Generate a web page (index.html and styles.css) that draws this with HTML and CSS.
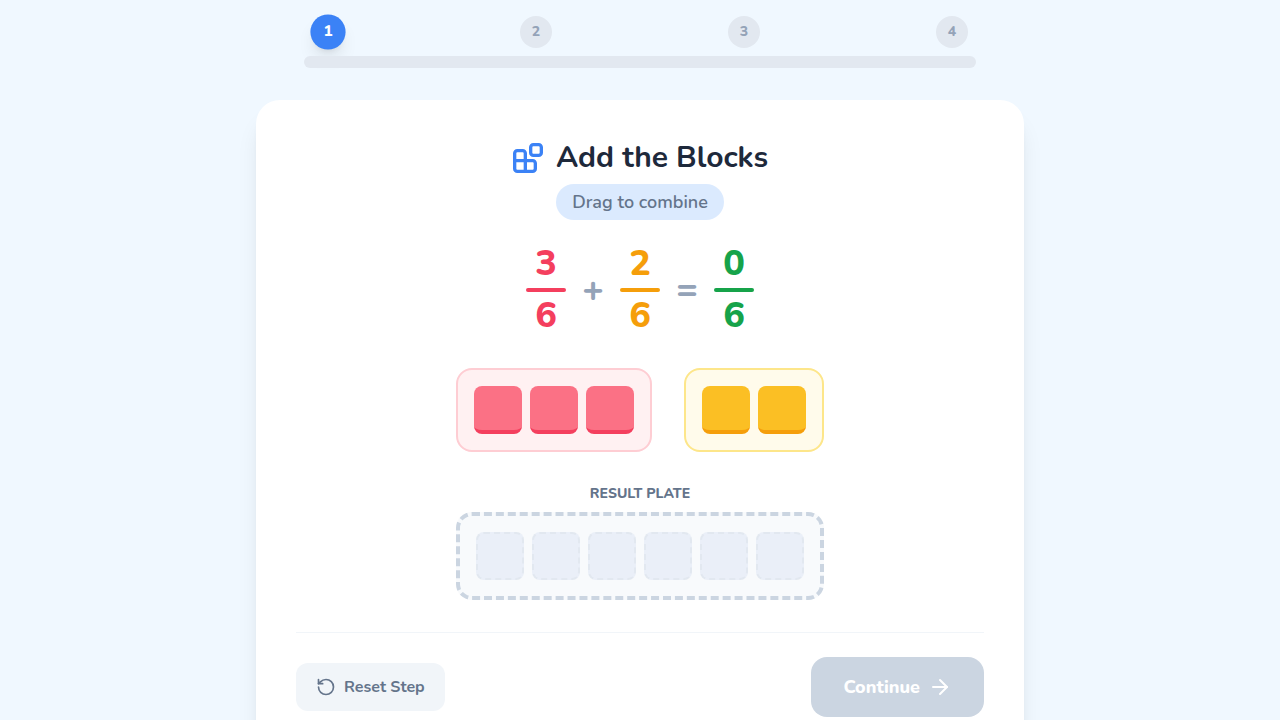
FILE: index.html
```
<!DOCTYPE html>
<html lang="en">
    <head>
        <meta charset="utf-8">
        <meta name="viewport" content="width=device-width, initial-scale=1">
        <title>Add the Blocks</title>

        <link rel="stylesheet" href="styles.css">
    </head>

    <body>
        <div class="page">
            <div class="progress">
                <ol class="steps">
                    <li class="step active">1</li>
                    <li class="step">2</li>
                    <li class="step">3</li>
                    <li class="step">4</li>
                </ol>
                <div class="track"></div>
            </div>

            <main class="card">
                <header class="intro">
                    <h1 class="title">
                        <svg class="title_icon" viewBox="0 0 24 24" aria-hidden="true">
                            <rect width="8" height="8" x="14" y="2" rx="2"/>
                            <path d="M10 22V8.500a2 2 0 0 0-2-2H4a2 2 0 0 0-2 2V20a2 2 0 0 0 2 2h11.500a2 2 0 0 0 2-2v-4a2 2 0 0 0-2-2H2"/>
                        </svg>
                        Add the Blocks
                    </h1>
                    <p class="hint">Drag to combine</p>
                </header>

                <div class="equation">
                    <div class="fraction rose">
                        <span>3</span>
                        <span class="line"></span>
                        <span>6</span>
                    </div>
                    <span class="operator">+</span>
                    <div class="fraction amber">
                        <span>2</span>
                        <span class="line"></span>
                        <span>6</span>
                    </div>
                    <span class="operator">=</span>
                    <div class="fraction green">
                        <span>0</span>
                        <span class="line"></span>
                        <span>6</span>
                    </div>
                </div>

                <div class="sources">
                    <div class="tray tray_rose">
                        <div class="block block_rose" draggable="true"></div>
                        <div class="block block_rose" draggable="true"></div>
                        <div class="block block_rose" draggable="true"></div>
                    </div>
                    <div class="tray tray_amber">
                        <div class="block block_amber" draggable="true"></div>
                        <div class="block block_amber" draggable="true"></div>
                    </div>
                </div>

                <section class="result">
                    <h2 class="result_label">Result Plate</h2>
                    <div class="plate">
                        <div class="slot"></div>
                        <div class="slot"></div>
                        <div class="slot"></div>
                        <div class="slot"></div>
                        <div class="slot"></div>
                        <div class="slot"></div>
                    </div>
                </section>

                <footer class="actions">
                    <button type="button" class="reset">
                        <svg class="reset_icon" viewBox="0 0 24 24" aria-hidden="true">
                            <path d="M3 12a9 9 0 1 0 9-9 9.75 9.75 0 0 0-6.74 2.74L3 8"/>
                            <path d="M3 3v5h5"/>
                        </svg>
                        Reset Step
                    </button>
                    <button type="button" class="continue" disabled>
                        Continue
                        <svg class="continue_icon" viewBox="0 0 24 24" aria-hidden="true">
                            <path d="M5 12h14"/>
                            <path d="m12 5 7 7-7 7"/>
                        </svg>
                    </button>
                </footer>
            </main>
        </div>
    </body>
</html>
```
FILE: styles.css
```
*
{
    box-sizing:border-box;
    margin:0;
    padding:0;
}

body
{
    min-height:100vh;
    background-color:#f0f8ff;
    color:#1e293b;
    font-family:"Nunito", "Open Sans", sans-serif;
    font-size:16px;
    line-height:24px;
}

svg
{
    fill:none;
    stroke:currentColor;
    stroke-width:2;
    stroke-linecap:round;
    stroke-linejoin:round;
    flex-shrink:0;
}

.page
{
    max-width:768px;
    margin:0 auto;
    padding:16px 0 32px;
}

.progress
{
    max-width:672px;
    margin:0 auto 32px;
}

.steps
{
    display:flex;
    justify-content:space-between;
    list-style:none;
    padding:0 8px;
    margin-bottom:8px;
}

.step
{
    display:flex;
    align-items:center;
    justify-content:center;
    width:32px;
    height:32px;
    border-radius:50%;
    background-color:#e2e8f0;
    color:#94a3b8;
    font-size:14px;
    font-weight:800;
    line-height:20px;
}

.step.active
{
    background-color:#3b82f6;
    color:#ffffff;
    transform:scale(1.1);
    box-shadow:0 10px 15px -3px rgba(0,0,0,0.1), 0 4px 6px -4px rgba(0,0,0,0.1);
}

.track
{
    position:relative;
    height:12px;
    border-radius:6px;
    background-color:#e2e8f0;
}

.card
{
    padding:40px;
    border-radius:24px;
    background-color:#ffffff;
    box-shadow:0 20px 25px -5px rgba(0,0,0,0.1), 0 8px 10px -6px rgba(0,0,0,0.1);
}

.intro
{
    display:flex;
    flex-direction:column;
    align-items:center;
    gap:8px;
    margin-bottom:24px;
}

.title
{
    display:flex;
    align-items:center;
    gap:12px;
    font-size:30px;
    font-weight:700;
    line-height:36px;
}

.title_icon
{
    width:32px;
    height:32px;
    color:#3b82f6;
    stroke-width:2.5;
}

.hint
{
    padding:4px 16px;
    border-radius:18px;
    background-color:#dbeafe;
    color:#64748b;
    font-size:18px;
    font-weight:600;
    line-height:28px;
}

.equation
{
    display:flex;
    align-items:center;
    justify-content:center;
    gap:16px;
    margin-bottom:32px;
    font-size:36px;
    font-weight:800;
    line-height:40px;
}

.fraction
{
    display:flex;
    flex-direction:column;
    align-items:center;
    gap:4px;
}

.line
{
    width:40px;
    height:4px;
    border-radius:2px;
    background-color:currentColor;
}

.rose
{
    color:#f43f5e;
}

.amber
{
    color:#f59e0b;
}

.green
{
    color:#16a34a;
}

.operator
{
    width:22px;
    text-align:center;
    color:#94a3b8;
}

.sources
{
    display:flex;
    flex-wrap:wrap;
    justify-content:center;
    gap:32px;
    margin-bottom:32px;
}

.tray
{
    display:flex;
    gap:8px;
    padding:16px;
    border:2px solid;
    border-radius:16px;
}

.tray_rose
{
    border-color:#fecdd3;
    background-color:#fff1f2;
}

.tray_amber
{
    border-color:#fde68a;
    background-color:#fffbeb;
}

.block
{
    width:48px;
    height:48px;
    border-radius:8px;
    border-bottom:4px solid;
    cursor:grab;
}

.block_rose
{
    border-color:#f43f5e;
    background-color:#fb7185;
}

.block_amber
{
    border-color:#f59e0b;
    background-color:#fbbf24;
}

.result
{
    display:flex;
    flex-direction:column;
    align-items:center;
    gap:8px;
    margin-bottom:32px;
}

.result_label
{
    color:#64748b;
    font-size:14px;
    font-weight:800;
    line-height:20px;
    text-transform:uppercase;
}

.plate
{
    display:flex;
    flex-wrap:wrap;
    justify-content:center;
    gap:8px;
    padding:16px;
    border:4px dashed #cbd5e1;
    border-radius:16px;
    background-color:#f8fafc;
}

.slot
{
    width:48px;
    height:48px;
    border:2px dashed #e2e8f0;
    border-radius:8px;
    background-color:#eaeff8;
}

.actions
{
    display:flex;
    align-items:center;
    justify-content:space-between;
    padding-top:24px;
    border-top:1px solid #f1f5f9;
}

.reset,
.continue
{
    display:flex;
    align-items:center;
    gap:8px;
    border:none;
    font-family:inherit;
    font-weight:700;
}

.reset
{
    padding:12px 20px;
    border-radius:12px;
    background-color:#f1f5f9;
    color:#64748b;
    font-size:16px;
    line-height:24px;
    cursor:pointer;
}

.reset_icon
{
    width:20px;
    height:20px;
}

.continue
{
    padding:16px 32px;
    border-radius:16px;
    background-color:#cbd5e1;
    color:#ffffff;
    font-size:18px;
    font-weight:800;
    line-height:28px;
    cursor:not-allowed;
}

.continue_icon
{
    width:24px;
    height:24px;
}
```
